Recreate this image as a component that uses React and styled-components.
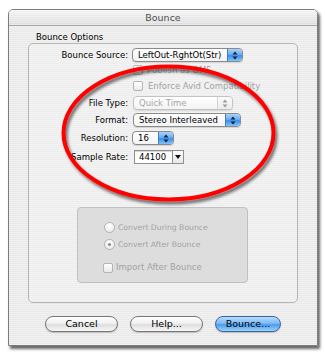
import React from "react";
import styled, { createGlobalStyle, css } from "styled-components";

const Global = createGlobalStyle`
  html, body { margin: 0; padding: 0; background: #ffffff; }
  body { font-family: "DejaVu Sans", Verdana, sans-serif; }
  #root { position: relative; width: 325px; height: 354px; overflow: hidden; }
`;

const Page = styled.div`
  position: relative;
  width: 325px;
  height: 354px;
  padding: 9px 0 0 8px;
  box-sizing: border-box;
`;

const Window = styled.div`
  width: 310px;
  height: 337px;
  box-sizing: border-box;
  border: 1px solid #7c7c7c;
  border-radius: 5px 5px 0 0;
  box-shadow: 2px 3px 3px rgba(0, 0, 0, 0.6);
  background: repeating-linear-gradient(#f1f1f1 0 1px, #e9e9e9 1px 2px);
  display: flex;
  flex-direction: column;
  overflow: hidden;
`;

const TitleBar = styled.div`
  height: 16px;
  box-sizing: border-box;
  border-bottom: 1px solid #a3a3a3;
  background: repeating-linear-gradient(rgba(255,255,255,0.35) 0 1px, rgba(0,0,0,0.02) 1px 2px),
    linear-gradient(#f6f6f6, #e0e0e0);
  display: flex;
  align-items: center;
  justify-content: center;
  font-size: 9.5px;
  line-height: 15px;
  color: #4e4e4e;
`;

const Body = styled.div`
  display: flex;
  flex-direction: column;
  padding: 6px 0 0 19px;
`;

const OptionsTitle = styled.div`
  margin-left: 8px;
  font-size: 8.5px;
  line-height: 11px;
  color: #000;
`;

const GroupBox = styled.div`
  width: 270px;
  height: 260px;
  box-sizing: border-box;
  border: 1px solid #b4b4b4;
  border-radius: 5px;
  background: rgba(255, 255, 255, 0.18);
  padding-top: 4px;
  display: flex;
  flex-direction: column;
`;

const Row = styled.div`
  display: grid;
  grid-template-columns: 99px 1fr;
  column-gap: 4px;
  align-items: center;
  height: ${(p) => p.$h}px;
  margin-top: ${(p) => p.$mt || 0}px;
`;

const Label = styled.div`
  text-align: right;
  font-size: 8.5px;
  line-height: 11px;
  white-space: nowrap;
  color: #000;
`;

const PopupBox = styled.div`
  width: ${(p) => p.$w}px;
  height: 14px;
  box-sizing: border-box;
  margin-left: ${(p) => p.$ml || 0}px;
  border: 1px solid ${(p) => (p.$disabled ? "#c3c3c3" : "#8a8a8a")};
  border-radius: 4px;
  background: linear-gradient(#ffffff, #f3f3f3);
  display: flex;
  align-items: stretch;
  overflow: hidden;
  box-shadow: 0 1px 1px rgba(0, 0, 0, 0.12);
`;

const PopupText = styled.div`
  flex: 1;
  padding-left: 5px;
  font-size: 8.5px;
  line-height: 12px;
  white-space: nowrap;
  overflow: hidden;
  color: ${(p) => (p.$disabled ? "#a6a6a6" : "#000")};
`;

const PopupCap = styled.div`
  width: 14px;
  display: flex;
  align-items: center;
  justify-content: center;
  border-radius: 0 3px 3px 0;
  ${(p) =>
    p.$disabled
      ? css`
          background: linear-gradient(#fbfbfb, #ececec);
          border-left: 1px solid #d4d4d4;
        `
      : css`
          background: linear-gradient(#a9d2fa 0%, #6aaef3 45%, #3f8ee8 55%, #7cc4fa 100%);
          border-left: 1px solid #4a78b8;
        `}
`;

const Check = styled.div`
  width: 10px;
  height: 10px;
  box-sizing: border-box;
  margin-left: 1px;
  border: 1px solid #b5b5b5;
  border-radius: 2px;
  background: linear-gradient(#ffffff, #e9e9e9);
`;

const CheckLine = styled.div`
  display: flex;
  align-items: center;
  gap: ${(p) => p.$gap || 4}px;
  height: 100%;
`;

const DimText = styled.div`
  font-size: ${(p) => p.$size || 8.5}px;
  line-height: 11px;
  color: #a3a3a3;
  white-space: nowrap;
`;

const Combo = styled.div`
  display: flex;
  height: 14px;
  margin-left: 2px;
`;

const ComboField = styled.div`
  width: 38px;
  box-sizing: border-box;
  border: 1px solid #8f8f8f;
  border-right: none;
  background: #fff;
  font-size: 8.5px;
  line-height: 12px;
  padding-left: 4px;
  color: #000;
  box-shadow: inset 0 1px 1px rgba(0, 0, 0, 0.18);
`;

const ComboButton = styled.div`
  width: 12px;
  box-sizing: border-box;
  border: 1px solid #8f8f8f;
  background: linear-gradient(#ffffff, #e7e7e7);
  display: flex;
  align-items: center;
  justify-content: center;
`;

const InnerBox = styled.div`
  margin: 43px 0 0 48px;
  width: 171px;
  height: 76px;
  box-sizing: border-box;
  border: 1px solid #c0c0c0;
  border-radius: 4px;
  background: #dddddd;
  padding: 14px 0 0 26px;
  display: flex;
  flex-direction: column;
`;

const RadioRow = styled.div`
  display: flex;
  align-items: center;
  gap: 3px;
  height: 11px;
  margin-top: ${(p) => p.$mt || 0}px;
  margin-left: ${(p) => p.$ml || 0}px;
`;

const Radio = styled.div`
  width: 11px;
  height: 11px;
  box-sizing: border-box;
  border: 1px solid #b2b2b2;
  border-radius: 50%;
  background: radial-gradient(circle at 50% 30%, #ffffff, #e6e6e6);
  display: flex;
  align-items: center;
  justify-content: center;
  &::after {
    content: "";
    width: 3px;
    height: 3px;
    border-radius: 50%;
    background: ${(p) => (p.$on ? "#8a8a8a" : "transparent")};
  }
`;

const SmallCheck = styled(Check)`
  margin-left: 0;
`;

const ButtonRow = styled.div`
  display: flex;
  gap: 12px;
  margin: 13px 0 0 17px;
`;

const PushButton = styled.div`
  width: ${(p) => p.$w}px;
  height: 16px;
  box-sizing: border-box;
  border-radius: 8px;
  font-size: 9.5px;
  line-height: 14px;
  text-align: center;
  color: #000;
  ${(p) =>
    p.$default
      ? css`
          border: 1px solid #41639d;
          background: linear-gradient(#b7dcfd 0%, #7cbaf5 45%, #4d9bef 55%, #9ad6fb 100%);
        `
      : css`
          border: 1px solid #777;
          background: linear-gradient(#ffffff 0%, #f1f1f1 45%, #dedede 55%, #f7f7f7 100%);
        `}
  box-shadow: 0 1px 1px rgba(0, 0, 0, 0.2);
`;

const Overlay = styled.svg`
  position: absolute;
  left: 0;
  top: 0;
  width: 325px;
  height: 354px;
  pointer-events: none;
`;

function Arrows({ disabled }) {
  const c = disabled ? "#9c9c9c" : "#10203a";
  return (
    <svg width="6" height="9" viewBox="0 0 6 9">
      <path d="M3 0.5 L5.5 3.5 L0.5 3.5 Z" fill={c} />
      <path d="M3 8.5 L5.5 5.5 L0.5 5.5 Z" fill={c} />
    </svg>
  );
}

function Popup({ w, text, disabled, ml }) {
  return (
    <PopupBox $w={w} $disabled={disabled} $ml={ml}>
      <PopupText $disabled={disabled}>{text}</PopupText>
      <PopupCap $disabled={disabled}>
        <Arrows disabled={disabled} />
      </PopupCap>
    </PopupBox>
  );
}

export default function App() {
  return (
    <>
      <Global />
      <Page>
        <Window>
          <TitleBar>Bounce</TitleBar>
          <Body>
            <OptionsTitle>Bounce Options</OptionsTitle>
            <GroupBox>
              <Row $h={14}>
                <Label>Bounce Source:</Label>
                <Popup w={111} text="LeftOut-RghtOt(Str)" />
              </Row>
              <Row $h={12} $mt={2}>
                <span />
                <CheckLine $gap={4}>
                  <Check />
                  <DimText>Publish as OMF</DimText>
                </CheckLine>
              </Row>
              <Row $h={12} $mt={4}>
                <span />
                <CheckLine $gap={5}>
                  <Check />
                  <DimText>Enforce Avid Compatibility</DimText>
                </CheckLine>
              </Row>
              <Row $h={14} $mt={4}>
                <Label>File Type:</Label>
                <Popup w={100} ml={1} text="Quick Time" disabled />
              </Row>
              <Row $h={14} $mt={3}>
                <Label>Format:</Label>
                <Popup w={108} ml={1} text="Stereo Interleaved" />
              </Row>
              <Row $h={14} $mt={4}>
                <Label>Resolution:</Label>
                <Popup w={42} text="16" />
              </Row>
              <Row $h={14} $mt={5}>
                <Label>Sample Rate:</Label>
                <Combo>
                  <ComboField>44100</ComboField>
                  <ComboButton>
                    <svg width="6" height="4" viewBox="0 0 6 4">
                      <path d="M0 0 L6 0 L3 4 Z" fill="#111" />
                    </svg>
                  </ComboButton>
                </Combo>
              </Row>
              <InnerBox>
                <RadioRow>
                  <Radio />
                  <DimText $size={7.7}>Convert During Bounce</DimText>
                </RadioRow>
                <RadioRow $mt={6}>
                  <Radio $on />
                  <DimText $size={7.7}>Convert After Bounce</DimText>
                </RadioRow>
                <RadioRow $mt={12} $ml={-1}>
                  <SmallCheck />
                  <DimText>Import After Bounce</DimText>
                </RadioRow>
              </InnerBox>
            </GroupBox>
            <ButtonRow>
              <PushButton $w={73}>Cancel</PushButton>
              <PushButton $w={73}>Help...</PushButton>
              <PushButton $w={66} $default>Bounce...</PushButton>
            </ButtonRow>
          </Body>
        </Window>
        <Overlay viewBox="0 0 325 354">
          <defs>
            <filter id="sh" x="-20%" y="-20%" width="140%" height="140%">
              <feDropShadow dx="2" dy="3" stdDeviation="1.6" floodColor="#000" floodOpacity="0.55" />
            </filter>
          </defs>
          <ellipse cx="168.5" cy="133" rx="105" ry="66.5" fill="none" stroke="#ff0000" strokeWidth="4" filter="url(#sh)" />
        </Overlay>
      </Page>
    </>
  );
}
